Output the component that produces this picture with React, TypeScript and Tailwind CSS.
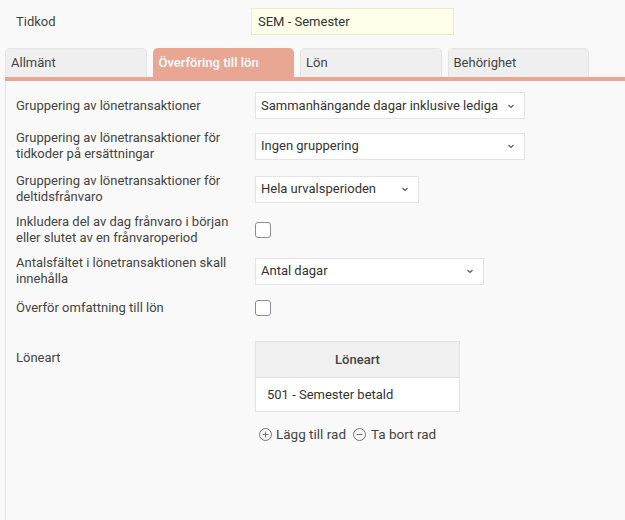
import React, { useState } from 'react';

const tabs = ['Allmänt', 'Överföring till lön', 'Lön', 'Behörighet'];

const Chevron: React.FC = () => (
  <svg width="10" height="10" viewBox="0 0 10 10" className="ml-auto shrink-0 text-[#555]">
    <path d="M2.5 4 L5 6.5 L7.5 4" fill="none" stroke="currentColor" strokeWidth="1.1" />
  </svg>
);

const Select: React.FC<{ value: string; width: string }> = ({ value, width }) => (
  <div className={`${width} h-[27px] flex items-center pl-[5px] pr-[8px] bg-white border border-[#e3e3e3] text-[13px] text-[#333]`}>
    <span className="truncate">{value}</span>
    <Chevron />
  </div>
);

const Checkbox: React.FC = () => (
  <div className="w-[16px] h-[16px] rounded-[3px] border border-[#8c8c99] bg-white" />
);

const Row: React.FC<{ label: React.ReactNode; className?: string; children: React.ReactNode }> = ({ label, className, children }) => (
  <div className={`flex items-center ${className ?? ''}`}>
    <div className="w-[239px] shrink-0 pr-[10px] text-[13px] leading-[16px] text-[#444]">{label}</div>
    {children}
  </div>
);

const CircleIcon: React.FC<{ plus?: boolean }> = ({ plus }) => (
  <svg width="13" height="13" viewBox="0 0 13 13" className="text-[#666]">
    <circle cx="6.5" cy="6.5" r="6" fill="none" stroke="currentColor" strokeWidth="0.9" />
    <path d="M3.5 6.5 H9.5" stroke="currentColor" strokeWidth="0.9" />
    {plus && <path d="M6.5 3.5 V9.5" stroke="currentColor" strokeWidth="0.9" />}
  </svg>
);

const App: React.FC = () => {
  const [active, setActive] = useState(1);

  return (
    <div className="w-[625px] h-[520px] overflow-hidden bg-[#f9f9f9] font-['Roboto',sans-serif] text-[#444]">
      <div className="flex items-center h-[44px] pl-[16px]">
        <div className="w-[235px] text-[13px]">Tidkod</div>
        <div className="w-[203px] h-[27px] mt-[-1px] flex items-center px-[6px] bg-[#ffffea] border border-[#e9e9d0] text-[13px] text-[#333]">
          SEM - Semester
        </div>
      </div>

      <div className="flex gap-[6px] pl-[5px] mt-[4px]">
        {tabs.map((t, i) => (
          <button
            key={t}
            onClick={() => setActive(i)}
            className={
              i === active
                ? 'w-[141.5px] h-[29px] rounded-t-[5px] bg-[#e8a693] text-left pl-[6px] text-[13px] font-medium text-white'
                : 'w-[141.5px] h-[29px] rounded-t-[5px] bg-[#efefef] border border-b-0 border-[#e4e4e4] text-left pl-[5px] text-[13px] text-[#444]'
            }
          >
            {t}
          </button>
        ))}
      </div>
      <div className="ml-[5px] h-[4px] bg-[#e8a693]" />

      <div className="ml-[5px] border-l border-[#e2e2e2] h-[439px] pl-[10px] pt-[11px]">
        <Row label="Gruppering av lönetransaktioner">
          <Select value="Sammanhängande dagar inklusive lediga" width="w-[270px]" />
        </Row>
        <Row label={<>Gruppering av lönetransaktioner för<br />tidkoder på ersättningar</>} className="mt-[11px]">
          <Select value="Ingen gruppering" width="w-[270px]" />
        </Row>
        <Row label={<>Gruppering av lönetransaktioner för<br />deltidsfrånvaro</>} className="mt-[11px]">
          <Select value="Hela urvalsperioden" width="w-[164px]" />
        </Row>
        <Row label={<>Inkludera del av dag frånvaro i början<br />eller slutet av en frånvaroperiod</>} className="mt-[9px]">
          <Checkbox />
        </Row>
        <Row label={<>Antalsfältet i lönetransaktionen skall<br />innehålla</>} className="mt-[9px]">
          <Select value="Antal dagar" width="w-[229px]" />
        </Row>
        <Row label="Överför omfattning till lön" className="mt-[13px]">
          <Checkbox />
        </Row>

        <div className="flex mt-[25px]">
          <div className="w-[239px] shrink-0 text-[13px] pt-[7px]">Löneart</div>
          <div>
            <div className="w-[205px] border border-[#e2e2e2]">
              <div className="h-[36px] flex items-center justify-center bg-[#f0f0f0] border-b border-[#e2e2e2] text-[13px] font-medium text-[#444]">
                Löneart
              </div>
              <div className="h-[33px] flex items-center pl-[11px] bg-white text-[13px] text-[#333]">
                501 - Semester betald
              </div>
            </div>
            <div className="flex items-center mt-[12px] ml-[4px] text-[13.5px] text-[#444]">
              <CircleIcon plus />
              <span className="ml-[4px]">Lägg till rad</span>
              <span className="ml-[7px]"><CircleIcon /></span>
              <span className="ml-[5px]">Ta bort rad</span>
            </div>
          </div>
        </div>
      </div>
    </div>
  );
};

export default App;
